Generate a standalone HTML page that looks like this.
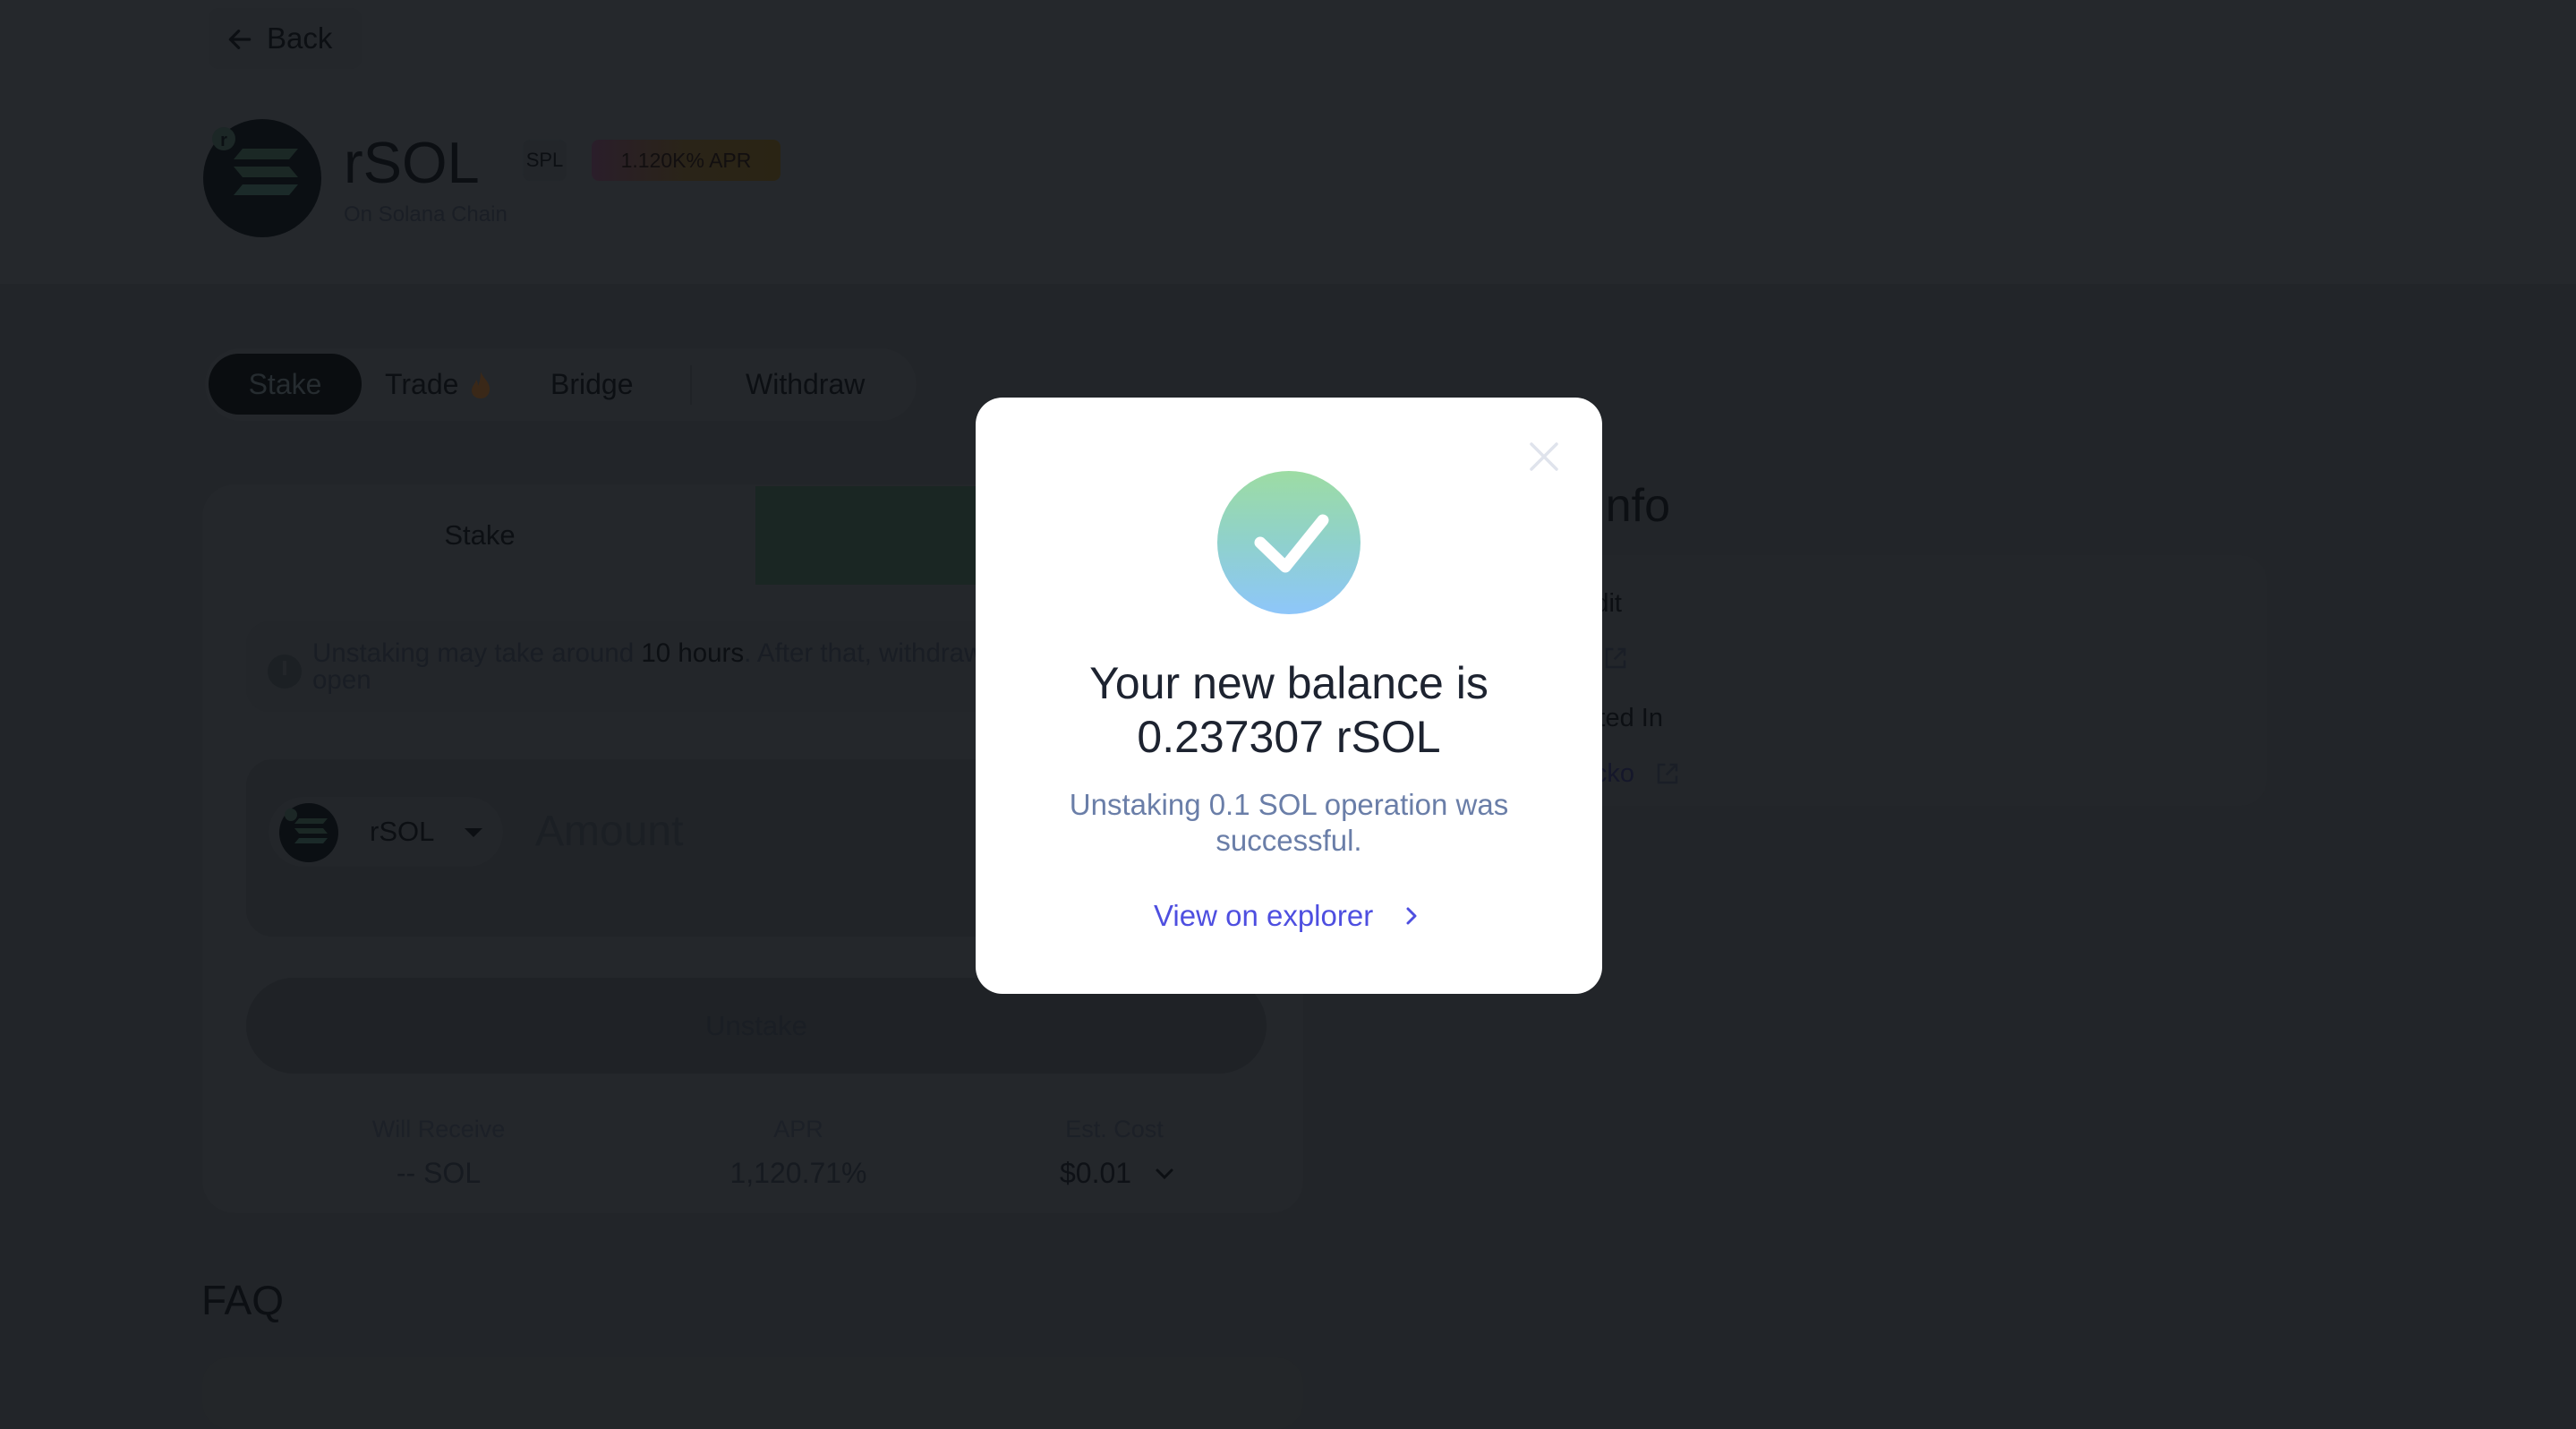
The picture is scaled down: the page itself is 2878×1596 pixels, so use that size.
<!DOCTYPE html>
<html><head><meta charset="utf-8">
<style>
*{margin:0;padding:0;box-sizing:border-box}
body{width:2878px;height:1554px;overflow:hidden;background:#222529;font-family:"Liberation Sans",sans-serif;position:relative;color:#0c0f13}
.a{position:absolute;white-space:nowrap}
.hdr{position:absolute;left:0;top:0;width:2878px;height:317px;background:#25282c}
.dim{color:#1a1e25}
</style></head><body>
<div class="hdr"></div>

<!-- Back -->
<div class="a" style="left:233px;top:9px;width:171px;height:68px;border-radius:12px;background:#24272b"></div>
<svg class="a" style="left:252px;top:28px" width="32" height="32" viewBox="0 0 24 24"><path d="M20 12H5M11 5l-7 7 7 7" fill="none" stroke="#0c0f13" stroke-width="2.4" stroke-linecap="round" stroke-linejoin="round"/></svg>
<div class="a" style="left:298px;top:24px;font-size:33px;line-height:38px">Back</div>

<!-- Token header -->
<svg class="a" style="left:226px;top:132px" width="135" height="135" viewBox="0 0 135 135">
<circle cx="67" cy="67" r="66" fill="#0b0f13"/>
<path d="M45 34h62l-10 12H35z" fill="#1b2825"/>
<path d="M35 54h62l10 12H45z" fill="#1b2825"/>
<path d="M45 74h62l-10 12H35z" fill="#1b2a29"/>
<circle cx="24" cy="23" r="13" fill="#1c2726"/>
<text x="24" y="31" font-size="20" font-family="Liberation Sans" text-anchor="middle" fill="#0b0f13" font-weight="bold">r</text>
</svg>
<div class="a" style="left:384px;top:144px;font-size:65px;line-height:76px">rSOL</div>
<div class="a" style="left:584px;top:156px;width:49px;height:46px;border-radius:8px;border:1px solid #23272b;background:#23262a;font-size:22px;line-height:44px;text-align:center">SPL</div>
<div class="a" style="left:661px;top:156px;width:211px;height:46px;border-radius:8px;background:linear-gradient(90deg,#2a1e2a,#2a2418,#2a2414);font-size:23px;line-height:46px;text-align:center;color:#120f10">1.120K% APR</div>
<div class="a dim" style="left:384px;top:226px;font-size:24px;line-height:28px">On Solana Chain</div>

<!-- Tabs -->
<div class="a" style="left:229px;top:389px;width:795px;height:81px;border-radius:40px;background:#24272b"></div>
<div class="a" style="left:233px;top:395px;width:171px;height:68px;border-radius:34px;background:#0a0d10"></div>
<div class="a" style="left:233px;top:395px;width:171px;font-size:32px;line-height:68px;text-align:center;color:#262c30">Stake</div>
<div class="a" style="left:430px;top:395px;font-size:32px;line-height:68px">Trade</div>
<svg class="a" style="left:524px;top:413px" width="26" height="34" viewBox="0 0 26 34"><path d="M13 2C16 10 24 14 23 23c-1 6-5 9-10 9S3 29 3 23c0-5 4-7 5-12 2 3 2 5 2 7 2-4 3-10 3-16z" fill="#3a2818"/></svg>
<div class="a" style="left:615px;top:395px;font-size:32px;line-height:68px">Bridge</div>
<div class="a" style="left:771px;top:408px;width:2px;height:44px;background:#202327"></div>
<div class="a" style="left:833px;top:395px;font-size:32px;line-height:68px">Withdraw</div>

<!-- Main card -->
<div class="a" style="left:226px;top:541px;width:1230px;height:814px;border-radius:36px;background:#24272b"></div>
<div class="a" style="left:844px;top:543px;width:400px;height:110px;background:#1a2623"></div>
<div class="a" style="left:228px;top:543px;width:616px;font-size:31px;line-height:110px;text-align:center">Stake</div>

<div class="a" style="left:275px;top:694px;width:1140px;height:101px;border-radius:26px;background:#23262a"></div>
<div class="a" style="left:299px;top:731px;width:38px;height:38px;border-radius:50%;background:#1c2024"></div>
<div class="a" style="left:316px;top:738px;width:4px;height:16px;background:#23262a"></div>
<div class="a dim" style="left:349px;top:714px;font-size:29.5px;line-height:32px;color:#191d24">Unstaking may take around <span style="color:#0c0f13">10 hours</span>. After that, withdraw will open</div>
<div class="a dim" style="left:349px;top:744px;font-size:29.5px;line-height:32px;color:#191d24">open</div>

<div class="a" style="left:275px;top:848px;width:1140px;height:198px;border-radius:30px;background:#212428"></div>
<div class="a" style="left:300px;top:890px;width:262px;height:78px;border-radius:39px;background:#23262a"></div>
<svg class="a" style="left:312px;top:896px" width="68" height="68" viewBox="0 0 68 68">
<circle cx="33" cy="34" r="33" fill="#0b0f13"/>
<path d="M22 18h32l-5 6H17z" fill="#1b2825"/><path d="M17 29h32l5 6H22z" fill="#1b2825"/><path d="M22 40h32l-5 6H17z" fill="#1b2a29"/>
<circle cx="13" cy="14" r="7" fill="#1c2726"/>
</svg>
<div class="a" style="left:413px;top:910px;font-size:31px;line-height:38px">rSOL</div>
<div class="a" style="left:519px;top:925px;width:0;height:0;border-left:10px solid transparent;border-right:10px solid transparent;border-top:10px solid #0c0f13"></div>
<div class="a" style="left:598px;top:900px;font-size:48px;line-height:58px;color:#1b1f24">Amount</div>

<div class="a" style="left:275px;top:1092px;width:1140px;height:107px;border-radius:54px;background:#1f2226"></div>
<div class="a" style="left:275px;top:1092px;width:1140px;font-size:31px;line-height:107px;text-align:center;color:#1a1e24">Unstake</div>

<div class="a" style="left:390px;top:1246px;width:200px;text-align:center;font-size:27px;color:#1c2027">Will Receive</div>
<div class="a" style="left:390px;top:1292px;width:200px;text-align:center;font-size:32px;color:#161a20">-- SOL</div>
<div class="a" style="left:792px;top:1246px;width:200px;text-align:center;font-size:27px;color:#1c2027">APR</div>
<div class="a" style="left:792px;top:1292px;width:200px;text-align:center;font-size:32px;color:#161a20">1,120.71%</div>
<div class="a" style="left:1130px;top:1246px;width:230px;text-align:center;font-size:27px;color:#1c2027">Est. Cost</div>
<div class="a" style="left:1184px;top:1292px;font-size:32px;color:#0e1116">$0.01</div>
<svg class="a" style="left:1288px;top:1300px" width="26" height="22" viewBox="0 0 26 22"><path d="M5 7l8 8 8-8" fill="none" stroke="#0c0f13" stroke-width="3" stroke-linecap="round"/></svg>

<div class="a" style="left:225px;top:1424px;font-size:46px;line-height:56px">FAQ</div>
<div class="a" style="left:226px;top:1516px;width:1230px;height:80px;border-radius:30px;background:#232629"></div>

<!-- right panel -->
<div class="a" style="left:1700px;top:620px;width:833px;height:280px;border-radius:30px;background:#23262a"></div>
<div class="a" style="right:1012px;top:534px;font-size:52px;line-height:62px;text-align:right">Token Info</div>
<div class="a" style="right:1066px;top:656px;font-size:29px;line-height:36px">Audit</div>
<svg class="a" style="left:1790px;top:720px" width="30" height="30" viewBox="0 0 24 24"><path d="M10 4H4v16h16v-6M14 4h6v6M20 4l-9 9" fill="none" stroke="#1a1e26" stroke-width="2"/></svg>
<div class="a" style="right:1020px;top:784px;font-size:29px;line-height:36px">Listed In</div>
<div class="a" style="right:1052px;top:846px;font-size:29px;line-height:36px;color:#15172a">CoinGecko</div>
<svg class="a" style="left:1848px;top:849px" width="30" height="30" viewBox="0 0 24 24"><path d="M10 4H4v16h16v-6M14 4h6v6M20 4l-9 9" fill="none" stroke="#1a1e26" stroke-width="2"/></svg>

<!-- Modal -->
<div class="a" style="left:1090px;top:444px;width:700px;height:666px;border-radius:30px;background:#fff"></div>
<svg class="a" style="left:1707px;top:492px" width="36" height="36" viewBox="0 0 36 36"><path d="M4 4l28 28M32 4L4 32" stroke="#dfe3ec" stroke-width="3.5" stroke-linecap="round"/></svg>
<svg class="a" style="left:1360px;top:526px" width="160" height="160" viewBox="0 0 160 160">
<defs><linearGradient id="g" x1="0" y1="0" x2="0" y2="1"><stop offset="0" stop-color="#9ddca3"/><stop offset="0.5" stop-color="#8fd1cc"/><stop offset="1" stop-color="#8ec6fa"/></linearGradient></defs>
<circle cx="80" cy="80" r="80" fill="url(#g)"/>
<path d="M48 80l28 27 42-52" fill="none" stroke="#fff" stroke-width="13" stroke-linecap="round" stroke-linejoin="round"/>
</svg>
<div class="a" style="left:1090px;top:733px;width:700px;text-align:center;font-size:50px;line-height:60px;color:#1d2330">Your new balance is<br>0.237307 rSOL</div>
<div class="a" style="left:1090px;top:879px;width:700px;text-align:center;font-size:33px;line-height:40px;color:#6a7ea8">Unstaking 0.1 SOL operation was<br>successful.</div>
<div class="a" style="left:1289px;top:1003px;font-size:33px;line-height:40px;color:#4e4fe0">View on explorer</div>
<svg class="a" style="left:1565px;top:1010px" width="24" height="26" viewBox="0 0 24 26"><path d="M8 5l8 8-8 8" fill="none" stroke="#4e4fe0" stroke-width="3" stroke-linecap="round" stroke-linejoin="round"/></svg>
</body></html>
